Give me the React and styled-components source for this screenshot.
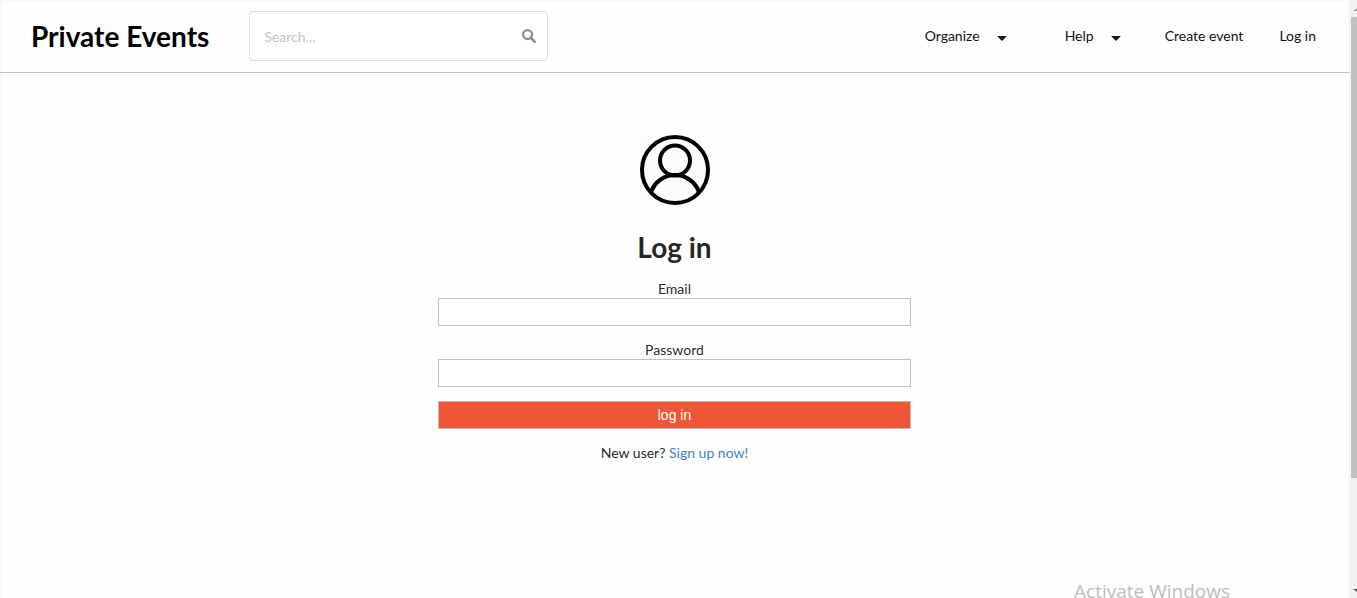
import React from "react";
import styled, { createGlobalStyle } from "styled-components";

const GlobalStyle = createGlobalStyle`
  * { box-sizing: border-box; }
  html, body, #root { height: 100%; }
  body {
    margin: 0;
    overflow: hidden;
    background: #fefefe;
    color: rgba(0, 0, 0, 0.87);
    font-family: Lato, "Liberation Sans", sans-serif;
    font-size: 14px;
    line-height: 20px;
  }
`;

const Shell = styled.div`
  display: flex;
  height: 100%;
  overflow: hidden;
`;

const Page = styled.div`
  flex: 1;
  min-width: 0;
  box-shadow: inset 1px 1px #f7f7f7;
`;

const Header = styled.header`
  display: flex;
  align-items: center;
  height: 73px;
  padding: 0 33px 0 31px;
  border-bottom: 1px solid #c4c4c4;
`;

const Brand = styled.h1`
  margin: 0 40px 0 0;
  color: #000;
  font-size: 28px;
  font-weight: 700;
  line-height: 36px;
  white-space: nowrap;
`;

const Search = styled.label`
  display: flex;
  align-items: center;
  width: 299px;
  height: 50px;
  padding: 0 11px 0 14px;
  border: 1px solid #dedede;
  border-radius: 4px;
  background: #fff;
`;

const SearchInput = styled.input`
  flex: 1;
  min-width: 0;
  padding: 2px 0 0;
  border: 0;
  outline: 0;
  background: transparent;
  font: inherit;
  &::placeholder { color: #c4c4c4; opacity: 1; }
`;

const Nav = styled.nav`
  display: flex;
  align-items: center;
  gap: 36px;
  margin-left: auto;
  white-space: nowrap;
`;

const NavLink = styled.a`
  color: #111;
  text-decoration: none;
`;

const Menu = styled.button`
  display: flex;
  align-items: center;
  gap: 17px;
  margin-right: ${(p) => p.$after || 0}px;
  padding: 0;
  border: 0;
  background: none;
  color: #111;
  font: inherit;
`;

const Caret = styled.svg`
  display: block;
  width: 10px;
  height: 5px;
  margin-top: 4px;
`;

const Main = styled.main`
  display: flex;
  flex-direction: column;
  align-items: center;
  padding-top: 62px;
`;

const Title = styled.h2`
  margin: 24px 0 14px;
  font-size: 28px;
  font-weight: 700;
  line-height: 36px;
`;

const Form = styled.form`
  display: flex;
  flex-direction: column;
  width: 35%;
  gap: 14px;
`;

const Field = styled.label`
  display: flex;
  flex-direction: column;
  text-align: center;
  line-height: 19px;
`;

const TextBox = styled.input`
  width: 100%;
  height: 28px;
  padding: 0 6px;
  border: 1px solid #c0c0c0;
  background: #fff;
  font: inherit;
`;

const Submit = styled.button`
  height: 28px;
  padding: 0;
  border: 1px solid #c8b8b4;
  background: #f05537;
  color: #fff;
  font: 14px "Liberation Sans", Arial, sans-serif;
`;

const Note = styled.p`
  margin: 14px 0 0;
`;

const SignUp = styled.a`
  color: #4183c4;
  text-decoration: none;
`;

const Scrollbar = styled.div`
  display: flex;
  flex-direction: column;
  justify-content: space-between;
  align-items: flex-end;
  width: 8px;
  padding: 8px 0 6px;
  background: #f1f1f1;
`;

const Thumb = styled.div`
  flex: 0 0 79%;
  width: 6px;
  margin: 6px 0 auto;
  background: #c1c1c1;
`;

const Watermark = styled.div`
  position: absolute;
  right: 127px;
  bottom: -6px;
  color: #bdbdbd;
  font: 19px/26px "Open Sans", sans-serif;
  white-space: nowrap;
`;

const DownCaret = () => (
  <Caret viewBox="0 0 10 5" aria-hidden="true">
    <path d="M.6 0h8.8v.6L5.4 4.8h-.8L.6.6z" fill="#1b1b1b" />
  </Caret>
);

export default function App() {
  return (
    <>
      <GlobalStyle />
      <Shell>
        <Page>
          <Header>
            <Brand>Private Events</Brand>
            <Search>
              <SearchInput type="text" placeholder="Search..." aria-label="Search" />
              <svg width="14" height="14" viewBox="0 0 14 14" fill="none" stroke="#8c8c8c" aria-hidden="true">
                <circle cx="5.6" cy="5.6" r="4.5" strokeWidth="2.2" />
                <path d="M9 9l3.800 3.800" strokeWidth="2.600" strokeLinecap="round" />
              </svg>
            </Search>
            <Nav>
              <Menu type="button" $after={22}>Organize<DownCaret /></Menu>
              <Menu type="button" $after={8}>Help<DownCaret /></Menu>
              <NavLink href="#create">Create event</NavLink>
              <NavLink href="#login">Log in</NavLink>
            </Nav>
          </Header>
          <Main>
            <svg width="70" height="70" viewBox="0 0 70 70" fill="none" stroke="#000" strokeWidth="4" aria-hidden="true">
              <rect width="70" height="70" fill="#fcfcfc" stroke="none" />
              <circle cx="35" cy="35" r="33" />
              <circle cx="35" cy="25.5" r="15" />
              <path d="M11 57A25.500 25.500 0 0 1 59 57" />
            </svg>
            <Title>Log in</Title>
            <Form onSubmit={(e) => e.preventDefault()}>
              <Field>Email<TextBox type="email" name="email" /></Field>
              <Field>Password<TextBox type="password" name="password" /></Field>
              <Submit type="submit">log in</Submit>
            </Form>
            <Note>New user? <SignUp href="#signup">Sign up now!</SignUp></Note>
          </Main>
        </Page>
        <Scrollbar aria-hidden="true">
          <svg width="4" height="3" viewBox="0 0 4 3"><path d="M0 3L4 0v3z" fill="#a3a3a3" /></svg>
          <Thumb />
          <svg width="4" height="3" viewBox="0 0 4 3"><path d="M0 0h4v3z" fill="#505050" /></svg>
        </Scrollbar>
      </Shell>
      <Watermark>Activate Windows</Watermark>
    </>
  );
}
